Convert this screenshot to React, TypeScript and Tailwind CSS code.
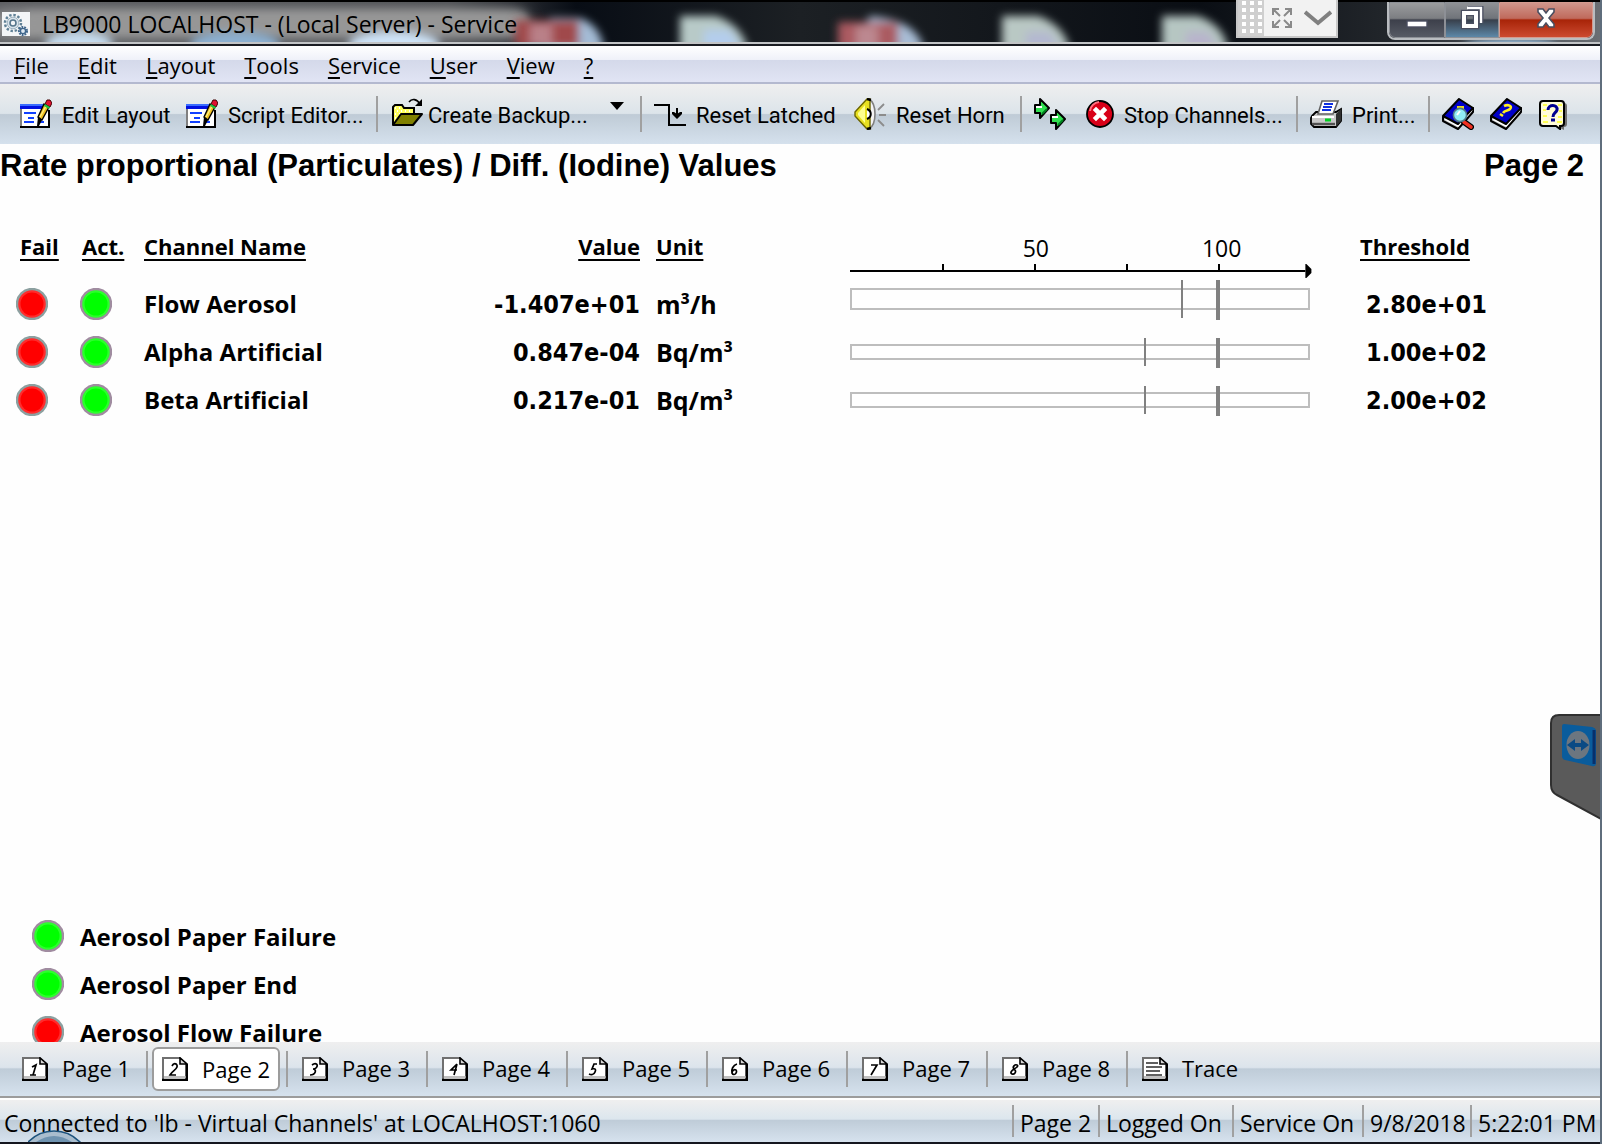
import type { ReactNode } from 'react';

/* ---------- icons ---------- */

function GearsIcon() {
  return (
    <svg viewBox="0 0 28 24" className="h-6 w-7 shrink-0">
      <rect width="28" height="24" fill="#f3f5f7" />
      <circle cx="11" cy="11" r="8" fill="none" stroke="#5f8096" strokeWidth="2.5" strokeDasharray="2.4 1.8" />
      <circle cx="11" cy="11" r="5.8" fill="#d7e2ea" stroke="#9fb4c2" />
      <circle cx="11" cy="11" r="3" fill="#f3f5f7" stroke="#56768c" strokeWidth="1.6" />
      <circle cx="21" cy="19" r="4" fill="none" stroke="#3f668c" strokeWidth="2" strokeDasharray="1.8 1" />
      <circle cx="21" cy="19" r="2.6" fill="#dfe9f2" stroke="#3f668c" strokeWidth="1.4" />
    </svg>
  );
}

function EditLayoutIcon() {
  return (
    <svg viewBox="0 0 32 32" className="size-8 shrink-0">
      <path d="M0 6h28v24H0z" fill="#808080" />
      <path d="M2 8h26v20H2z" fill="#fff" />
      <path d="M0 6h26v2H0z" fill="#3a6cff" />
      <path d="M0 8h26v3H0z" fill="#0010e0" />
      <path d="M0 28h30v2H0zM28 12h2v18h-2z" fill="#000" />
      <path d="M4 15h12M8 20h6M4 24h10M18 24h6" stroke="#1040ff" strokeWidth="2" />
      <path d="M24 6l5 3-7 13-4-3z" fill="#f0c020" stroke="#000" strokeWidth="1.4" />
      <path d="M26 8l-6 11" stroke="#fff080" strokeWidth="1.4" />
      <path d="M27 2h3l2 3-2 4-5-3z" fill="#e01030" stroke="#400000" strokeWidth="1" />
      <path d="M25 6l5 3-1 2-5-3z" fill="#20c040" />
      <path d="M18 19l4 3-3 6h-2z" fill="#000" />
    </svg>
  );
}

function FolderIcon() {
  return (
    <svg viewBox="0 0 32 32" className="size-8 shrink-0">
      <path d="M1 27V9l2-2h7l2 3h10v6" fill="#ffff60" stroke="#000" strokeWidth="2" />
      <path d="M3 10h1M7 10h1M5 13h1M9 13h1M13 13h1M17 13h1M3 16h1M7 16h1M3 20h1" stroke="#fff" strokeWidth="2" />
      <path d="M1 27l8-11h21l-9 11z" fill="#808000" stroke="#000" strokeWidth="2" strokeLinejoin="round" />
      <path d="M17 4c3-4 8-3 11 2" fill="none" stroke="#000" strokeWidth="1.6" />
      <path d="M30 1v7h-7z" fill="#000" />
    </svg>
  );
}

function LatchIcon() {
  return (
    <svg viewBox="0 0 32 32" className="size-8 shrink-0">
      <path d="M0 7h15v20h17" fill="none" stroke="#000" strokeWidth="2" />
      <path d="M23 10v6" stroke="#000" strokeWidth="2" />
      <path d="M18 14h2l3 2 3-2h2v2l-5 5-5-5z" fill="#000" />
    </svg>
  );
}

function HornIcon() {
  return (
    <svg viewBox="0 0 32 32" className="size-8 shrink-0">
      <path d="M15 1c8 5 8 25 0 30z" fill="#f4f4f4" stroke="#808080" strokeWidth="1.6" />
      <path d="M1 14L13 1h3v30h-3L1 18z" fill="#e8e020" stroke="#6c6600" strokeWidth="1.4" />
      <path d="M4 15L11 7v18l-7-8z" fill="#ffff90" />
      <path d="M13 1l4 1M13 31l4-1" stroke="#000" strokeWidth="2.4" />
      <path d="M13 11c5 2 5 8 0 10" fill="#fff" stroke="#000" strokeWidth="2" />
      <path d="M24 12l6-6M25 17h7M24 22l6 6" stroke="#8c8c8c" strokeWidth="1.8" />
    </svg>
  );
}

function ArrowsIcon() {
  return (
    <svg viewBox="0 0 32 32" className="size-8 shrink-0">
      <g stroke="#000" strokeWidth="2" strokeLinejoin="round">
        <path d="M1 7h5V1l9 9-9 10v-5H1z" fill="#30e050" />
        <path d="M17 17h5v-5l9 9-9 10v-6h-5z" fill="#30e050" />
      </g>
      <path d="M2 9h6M18 19h6" stroke="#fff" strokeWidth="2" />
      <path d="M8 16l5-5M24 27l5-5" stroke="#008020" strokeWidth="2" />
    </svg>
  );
}

function StopIcon() {
  return (
    <svg viewBox="0 0 32 32" className="size-8 shrink-0">
      <circle cx="14" cy="16" r="13" fill="#d80018" stroke="#000" strokeWidth="1.8" />
      <path d="M4 13a10 10 0 0 1 9-9" fill="none" stroke="#ff7080" strokeWidth="2" />
      <path d="M10 12l8 8M18 12l-8 8" stroke="#fff" strokeWidth="4.6" strokeLinecap="square" />
    </svg>
  );
}

function PrinterIcon() {
  return (
    <svg viewBox="0 0 32 32" className="size-8 shrink-0">
      <path d="M2 18l4-4h20l5-3v12l-5 6H4l-3-3v-6z" fill="#c8c8c8" stroke="#000" strokeWidth="1.8" />
      <path d="M26 16l5-5v12l-5 6z" fill="#303030" />
      <path d="M8 16l4-13h16l-5 13z" fill="#fff" stroke="#606060" strokeWidth="1.6" />
      <path d="M14 6h9M13 9h9M12 12h9" stroke="#1030e0" strokeWidth="1.8" />
      <path d="M2 19h22" stroke="#fff" strokeWidth="2" />
      <path d="M15 22h6" stroke="#00d020" strokeWidth="3" />
      <path d="M2 26h23" stroke="#505050" strokeWidth="2.4" />
    </svg>
  );
}

function BookShape() {
  return (
    <>
      <path d="M1 19v4l15 8 15-17v-4z" fill="#c0c4c4" stroke="#000" strokeWidth="2" strokeLinejoin="round" />
      <path d="M3 21l13 7 14-16" fill="none" stroke="#fff" strokeWidth="1.6" />
      <path d="M1 18L17 1l14 9-15 16z" fill="#0000c8" stroke="#000" strokeWidth="2" strokeLinejoin="round" />
    </>
  );
}

function BookSearchIcon() {
  return (
    <svg viewBox="0 0 32 32" className="size-8 shrink-0">
      <BookShape />
      <path d="M15 8h7v4h-7z" fill="#e8d820" />
      <path d="M22 24l7 5" stroke="#000" strokeWidth="6" strokeLinecap="round" />
      <path d="M22 24l7 5" stroke="#f03020" strokeWidth="3.6" strokeLinecap="round" />
      <circle cx="18" cy="17" r="6.6" fill="#90ecf4" stroke="#507888" strokeWidth="1.6" />
      <path d="M15 17l3-4" stroke="#fff" strokeWidth="2" />
    </svg>
  );
}

function BookHelpIcon() {
  return (
    <svg viewBox="0 0 32 32" className="size-8 shrink-0">
      <BookShape />
      <path d="M14 8c4-2 9 0 6 3-2 2-5 1-7 4" fill="none" stroke="#ffee20" strokeWidth="2.6" />
      <path d="M10 16l3 2" stroke="#ffee20" strokeWidth="2.4" />
    </svg>
  );
}

function HelpIcon() {
  return (
    <svg viewBox="0 0 32 32" className="size-8 shrink-0">
      <path d="M6 5h20q3 0 3 3v18q0 3-3 3v3l-6-3H6z" fill="#707070" />
      <path d="M5 3h18q3 0 3 3v19q0 3-3 3h-1v3l-4-3H5q-3 0-3-3V6q0-3 3-3z" fill="#fffcd8" stroke="#000" strokeWidth="2" />
      <path d="M5 7h4M5 12h3M5 18h4M5 24h5M20 7h4M21 13h3M20 19h4M19 24h5" stroke="#ffff50" strokeWidth="2" />
      <path d="M10 12c0-6 10-6 9 0-1 3-4 3-4 7" fill="none" stroke="#000090" strokeWidth="3" />
      <path d="M13 22h4" stroke="#000090" strokeWidth="3" />
    </svg>
  );
}

const digitPaths: Record<string, string> = {
  '1': 'M10 10l4-2-3 10M8 18h6',
  '2': 'M10 9c2-4 6-2 5 1-1 3-5 4-7 8h6',
  '3': 'M10 8c4-3 7 0 4 3-1 1-3 1-3 1 4 0 3 6-3 6',
  '4': 'M15 7l-6 6h6M15 7l-3 11',
  '5': 'M15 7h-3l-2 5c4-1 4 1 3 3-1 3-4 3-6 2',
  '6': 'M15 7c-4 1-6 6-5 9 2 4 6-1 4-3-2-1-3 0-4 2',
  '7': 'M9 8h6L9 18',
  '8': 'M12 12c-2-2 1-5 3-4 2 1-1 3-3 4-3 2-4 4-2 5 3 1 5-3 2-5z',
};

function PageIcon({ mark }: { mark: string }) {
  return (
    <svg viewBox="0 0 26 24" className="h-6 w-[26px] shrink-0">
      <path d="M1 1h17l6 6v16H1z" fill="#fff" stroke="#707070" strokeWidth="2" />
      <path d="M2 20h22" stroke="#c0c0c0" strokeWidth="2" />
      <path d="M0 23h25V7" fill="none" stroke="#000" strokeWidth="2.4" />
      <path d="M18 1v6h7z" fill="#d8d8d8" stroke="#000" strokeWidth="1.6" />
      {mark === 'lines' ? (
        <path d="M4 6h12M4 10h16M4 14h14M4 18h16" stroke="#606060" strokeWidth="1.8" />
      ) : (
        <path d={digitPaths[mark]} fill="none" stroke="#000" strokeWidth="1.7" />
      )}
    </svg>
  );
}

/* ---------- window frame ---------- */

function GlassBackdrop() {
  const lights = [
    { x: 45, w: 68, c: '#c6dcee' },
    { x: 190, w: 90, c: '#8db0d0' },
    { x: 348, w: 92, c: '#cfe4f8' },
  ];
  return (
    <svg aria-hidden="true" className="absolute inset-0 h-full w-full">
      <defs>
        <filter id="soft" x="-20%" y="-60%" width="140%" height="220%">
          <feGaussianBlur stdDeviation="4" />
        </filter>
        <filter id="wide" x="-20%" y="-100%" width="140%" height="300%">
          <feGaussianBlur stdDeviation="9" />
        </filter>
        <linearGradient id="night" x1="0" x2="1" y1="0" y2="0">
          <stop offset="0" stopColor="#54565a" />
          <stop offset="0.28" stopColor="#484a4e" />
          <stop offset="0.36" stopColor="#080d15" />
          <stop offset="0.5" stopColor="#1c2024" />
          <stop offset="0.75" stopColor="#0a0e14" />
          <stop offset="0.87" stopColor="#22262b" />
          <stop offset="1" stopColor="#6a6e73" />
        </linearGradient>
      </defs>
      <rect width="100%" height="100%" fill="url(#night)" />
      <rect x="-10" y="10" width="536" height="24" rx="10" fill="#a8a8a8" filter="url(#wide)" />
      <rect x="20" y="10" width="508" height="22" rx="9" fill="#969696" filter="url(#soft)" />
      <g filter="url(#soft)">
        {lights.map((l) => (
          <ellipse key={l.x} cx={l.x + l.w / 2} cy="42" rx={l.w / 2} ry="13" fill={l.c} />
        ))}
        <path d="M550 16h30q22 8 24 34h-60z" fill="#a4bcd6" />
        <rect x="515" y="18" width="64" height="28" fill="#a0484c" />
        <rect x="530" y="22" width="22" height="24" fill="#b98088" />
        <path d="M680 14h36q28 10 32 36h-68z" fill="#b8cac8" />
        <path d="M704 28h26l12 20h-38z" fill="#b4cdec" />
        <path d="M870 14q50 4 54 36h-74z" fill="#a9bdd6" />
        <rect x="838" y="20" width="60" height="28" fill="#aa5a60" />
        <rect x="856" y="24" width="22" height="24" fill="#bc8890" />
        <path d="M1002 14h36q28 10 32 36h-68z" fill="#b9c8c4" />
        <path d="M1026 30h24l12 20h-36z" fill="#b4b8d0" />
        <path d="M1162 14h36q28 10 30 36h-66z" fill="#b6c6c2" />
        <path d="M1186 30h22l12 20h-34z" fill="#b8b4cc" />
        <ellipse cx="1510" cy="44" rx="46" ry="6" fill="#a8d4f8" />
      </g>
    </svg>
  );
}

function RemoteWidget() {
  return (
    <div className="absolute top-0 right-[262px] flex h-[38px] border-2 border-t-0 border-[#c8c8c8] bg-[#f2f2f2]">
      <svg viewBox="0 0 26 36" className="h-9 w-[26px] bg-[#cfcfcf]">
        {[2, 9, 16, 23, 30].map((y) =>
          [4, 12, 20].map((x) => <rect key={`${x}-${y}`} x={x} y={y - 1} width="4" height="4" fill="#fff" />),
        )}
      </svg>
      <button aria-label="Full screen" className="flex w-9 items-center justify-center">
        <svg viewBox="0 0 20 20" className="size-5" fill="none" stroke="#8a8a8a" strokeWidth="2">
          <path d="M1 7V1h6M13 1h6v6M19 13v6h-6M7 19H1v-6M1 1l7 7M19 1l-7 7M19 19l-7-7M1 19l7-7" />
        </svg>
      </button>
      <button aria-label="Expand" className="flex w-9 items-center justify-center">
        <svg viewBox="0 0 28 16" className="h-4 w-7" fill="none" stroke="#808080" strokeWidth="4">
          <path d="M1 2l13 11L27 2" />
        </svg>
      </button>
    </div>
  );
}

function CaptionButtons() {
  return (
    <div className="absolute top-0.5 right-[5px] flex h-[38px] overflow-hidden rounded-b-lg border-2 border-t-0 border-[#b9bcc0] bg-[#30343c]">
      <button
        aria-label="Minimize"
        className="flex w-[56px] items-center justify-center rounded-bl-md border border-[#8d9096] bg-linear-[180deg,#9b9c9e_0%,#7c7e82_45%,#3d404b_50%,#565a64_100%]"
      >
        <svg viewBox="0 0 24 20" className="h-5 w-6">
          <rect x="2" y="11" width="20" height="6" fill="#fff" stroke="#4a4e60" strokeWidth="1.4" />
        </svg>
      </button>
      <button
        aria-label="Restore"
        className="flex w-[54px] items-center justify-center border border-[#8d9096] bg-linear-[180deg,#8f9195_0%,#70747a_45%,#38404c_50%,#5d88a8_100%]"
      >
        <svg viewBox="0 0 24 24" className="-mt-1 size-6" fill="none">
          <path d="M8 2h13v15" stroke="#4a4e60" strokeWidth="5" />
          <path d="M7 2h14v15" stroke="#fff" strokeWidth="2.4" />
          <rect x="4" y="7" width="12" height="13" stroke="#4a4e60" strokeWidth="6.4" />
          <rect x="4" y="7" width="12" height="13" stroke="#fff" strokeWidth="4" />
        </svg>
      </button>
      <button
        aria-label="Close"
        className="flex w-[94px] items-center justify-center rounded-br-md border border-[#d49b90] bg-linear-[180deg,#d0968c_0%,#c06a5c_45%,#a82408_50%,#cc4a30_100%]"
      >
        <svg viewBox="0 0 24 20" className="-mt-1 h-5 w-6" fill="none">
          <path d="M4 1h5l3 4 3-4h5v3l-5 6 5 6v3h-5l-3-4-3 4H4v-3l5-6-5-6z" fill="#fff" stroke="#4a4e60" strokeWidth="1.6" />
        </svg>
      </button>
    </div>
  );
}

function TitleBar() {
  return (
    <header className="relative h-[46px] shrink-0 border-b-2 border-[#1a1c22] bg-black">
      <div className="relative flex h-11 items-center overflow-hidden border-t-2 border-b-2 border-t-black border-b-[#c2c4c6] pt-1 pl-0.5">
        <GlassBackdrop />
        <div className="relative flex items-center gap-3">
          <GearsIcon />
          <h1 className="text-[23px] leading-8 whitespace-nowrap">LB9000 LOCALHOST - (Local Server) - Service</h1>
        </div>
      </div>
      <RemoteWidget />
      <CaptionButtons />
    </header>
  );
}

const menus = ['File', 'Edit', 'Layout', 'Tools', 'Service', 'User', 'View', '?'];

function MenuBar() {
  return (
    <nav className="flex h-[38px] shrink-0 items-center gap-[29px] border-b-2 border-[#b4b9cf] bg-linear-[180deg,#ffffff_0%,#eff1f9_38%,#d4d9ea_40%,#e1e4f4_100%] pt-0.5 pl-3.5">
      {menus.map((m) => (
        <button key={m} className="text-[22px] leading-8">
          <span className="underline decoration-2 underline-offset-3">{m[0]}</span>
          {m.slice(1)}
        </button>
      ))}
    </nav>
  );
}

function Separator() {
  return <div className="h-9 w-0.5 shrink-0 bg-[#a0a0a0]" />;
}

function ToolButton({ icon, label, className }: { icon: ReactNode; label: string; className: string }) {
  return (
    <button className={`flex shrink-0 items-center text-[22px] whitespace-nowrap ${className}`}>
      {icon}
      <span className="pt-0.5">{label}</span>
    </button>
  );
}

function ToolBar() {
  return (
    <div
      role="toolbar"
      className="flex h-[60px] shrink-0 items-center bg-linear-[180deg,#efefef_0%,#dce4ea_49%,#bfcbd6_51%,#d5e1ed_100%] pl-5 font-['Roboto',sans-serif]"
    >
      <ToolButton icon={<EditLayoutIcon />} label="Edit Layout" className="w-[166px] gap-2.5" />
      <ToolButton icon={<EditLayoutIcon />} label="Script Editor..." className="w-[190px] gap-2.5" />
      <Separator />
      <ToolButton icon={<FolderIcon />} label="Create Backup..." className="w-[232px] gap-1 pl-3.5" />
      <button aria-label="Backup options" className="h-9 w-[30px] shrink-0">
        <svg viewBox="0 0 14 8" className="-mt-3 h-2 w-3.5">
          <path d="M0 0h14L7 8z" fill="#000" />
        </svg>
      </button>
      <Separator />
      <ToolButton icon={<LatchIcon />} label="Reset Latched" className="w-[212px] gap-2.5 pl-3" />
      <ToolButton icon={<HornIcon />} label="Reset Horn" className="w-[166px] gap-2.5" />
      <Separator />
      <button aria-label="Start channels" className="w-[64px] shrink-0 pl-3">
        <ArrowsIcon />
      </button>
      <ToolButton icon={<StopIcon />} label="Stop Channels..." className="w-[210px] gap-1.5" />
      <Separator />
      <ToolButton icon={<PrinterIcon />} label="Print..." className="w-[130px] gap-2.5 pl-3" />
      <Separator />
      <div className="flex gap-4 pl-3">
        <button aria-label="Search help">
          <BookSearchIcon />
        </button>
        <button aria-label="Help topics">
          <BookHelpIcon />
        </button>
        <button aria-label="About">
          <HelpIcon />
        </button>
      </div>
    </div>
  );
}

/* ---------- content ---------- */

function Lamp({ on, label }: { on: boolean; label: string }) {
  return (
    <svg viewBox="0 0 32 32" className="size-8 shrink-0" role="img" aria-label={label}>
      <circle cx="16" cy="16" r="15" fill={on ? '#2cff2c' : '#ff2c2c'} stroke={on ? '#a08ca0' : '#8ca0a0'} strokeWidth="2.4" />
      <circle cx="16" cy="16" r="11.5" fill={on ? '#00ff00' : '#ff0000'} />
    </svg>
  );
}

function Axis() {
  return (
    <svg className="block h-[58px] w-full overflow-visible" role="img" aria-label="Percent of threshold">
      <rect x="0" y="48" width="99%" height="2" />
      {['20%', '40%', '60%', '80%'].map((x) => (
        <rect key={x} x={x} y="42" width="2" height="6" />
      ))}
      <g className="text-[23px] font-normal" textAnchor="middle">
        <text x="40.4%" y="35">50</text>
        <text x="80.8%" y="35">100</text>
      </g>
      <svg x="99%" y="42" width="8" height="14" overflow="visible">
        <path d="M0 0h1l5 5v4l-5 5H0z" />
      </svg>
    </svg>
  );
}

function Gauge({ warn, tall }: { warn: string; tall: boolean }) {
  return (
    <div className="relative h-12">
      <div className={`absolute inset-x-0 border-2 border-[#bdbdbd] ${tall ? 'top-2 h-[22px]' : 'top-4 h-4'}`} />
      <div
        className={`absolute w-0.5 bg-[#808080] ${tall ? 'top-0 h-[38px]' : 'top-2.5 h-7'}`}
        style={{ left: warn }}
      />
      <div className={`absolute left-[80%] -ml-0.5 w-1 bg-[#808080] ${tall ? 'top-0 h-10' : 'top-2.5 h-[30px]'}`} />
    </div>
  );
}

const channels = [
  { name: 'Flow Aerosol', value: '-1.407e+01', unit: 'm³/h', threshold: '2.80e+01', warn: '72%', tall: true },
  { name: 'Alpha Artificial', value: '0.847e-04', unit: 'Bq/m³', threshold: '1.00e+02', warn: '64%', tall: false },
  { name: 'Beta Artificial', value: '0.217e-01', unit: 'Bq/m³', threshold: '2.00e+02', warn: '64%', tall: false },
];

const heading = 'pt-2 align-top text-[22px] leading-8 font-bold underline decoration-2 underline-offset-4';
const figure = "pt-0.5 text-[25px] font-['DejaVu_Sans_Condensed','DejaVu_Sans',sans-serif]";

function ChannelTable() {
  return (
    <table className="w-full table-fixed text-left">
      <colgroup>
        <col className="w-20" />
        <col className="w-16" />
        <col className="w-64" />
        <col className="w-[240px]" />
        <col className="w-[210px]" />
        <col />
        <col className="w-[290px]" />
      </colgroup>
      <thead>
        <tr>
          <th className={`pl-5 ${heading}`}>Fail</th>
          <th className={`pl-0.5 ${heading}`}>Act.</th>
          <th className={`whitespace-nowrap ${heading}`}>Channel Name</th>
          <th className={`text-right ${heading}`}>Value</th>
          <th className={`pl-4 ${heading}`}>Unit</th>
          <th className="p-0">
            <Axis />
          </th>
          <th className={`pl-[50px] ${heading}`}>Threshold</th>
        </tr>
      </thead>
      <tbody className="text-2xl leading-8 font-bold whitespace-nowrap">
        {channels.map((c) => (
          <tr key={c.name} className="h-12">
            <td className="pl-4">
              <Lamp on={false} label="Failure" />
            </td>
            <td>
              <Lamp on label="Active" />
            </td>
            <td>{c.name}</td>
            <td className={`text-right ${figure}`}>{c.value}</td>
            <td className="pl-4 text-[25px]">{c.unit}</td>
            <td>
              <Gauge warn={c.warn} tall={c.tall} />
            </td>
            <td className={`pl-14 ${figure}`}>{c.threshold}</td>
          </tr>
        ))}
      </tbody>
    </table>
  );
}

const states = [
  { label: 'Aerosol Paper Failure', on: true },
  { label: 'Aerosol Paper End', on: true },
  { label: 'Aerosol Flow Failure', on: false },
];

function SideTab() {
  return (
    <button aria-label="Remote session panel" className="absolute right-0 bottom-[222px]">
      <svg viewBox="0 0 50 106" className="h-[106px] w-[50px]">
        <path d="M51 1H9Q1 1 1 9v62q0 7 6 10l44 24z" fill="#5a5a5a" stroke="#303030" strokeWidth="2" />
        <path d="M14 10l28 3q4 1 4 4v32q0 4-4 3L15 46q-3-1-3-4V13q0-3 2-3z" fill="#0a5c9c" />
        <path d="M44 16v34" stroke="#08306c" strokeWidth="3" />
        <ellipse cx="28" cy="31" rx="11.5" ry="14" fill="#6c7680" />
        <path d="M17 31l8-6v4h6v-4l8 6-8 6v-4h-6v4z" fill="#0a4a84" />
      </svg>
    </button>
  );
}

function Content() {
  return (
    <main className="relative flex min-h-0 flex-1 flex-col overflow-hidden bg-[#fefefe]">
      <div className="flex h-[78px] shrink-0 justify-between pt-1 pr-4 font-['Liberation_Sans',sans-serif] text-[31px] leading-9 font-bold">
        <h2>Rate proportional (Particulates) / Diff. (Iodine) Values</h2>
        <p>Page 2</p>
      </div>
      <ChannelTable />
      <ul className="mt-auto -mb-3.5 pl-8 text-2xl font-bold">
        {states.map((s) => (
          <li key={s.label} className="flex h-12 items-center gap-4">
            <Lamp on={s.on} label={s.on ? 'OK' : 'Failure'} />
            <span className="pt-0.5">{s.label}</span>
          </li>
        ))}
      </ul>
      <SideTab />
    </main>
  );
}

/* ---------- bottom bars ---------- */

const tabs = ['1', '2', '3', '4', '5', '6', '7', '8'];

function PageTabs() {
  return (
    <nav className="flex h-[54px] shrink-0 items-center bg-linear-[180deg,#efefef_0%,#dce4ec_47%,#bfccd8_50%,#d6e2ee_100%] pl-2 text-[22px] leading-8">
      {tabs.map((t) => (
        <div key={t} className="flex w-[140px] shrink-0 items-center justify-between">
          <button
            aria-current={t === '2' ? 'page' : undefined}
            className={
              t === '2'
                ? 'ml-1 flex h-11 w-32 items-center gap-3.5 rounded-md border-2 border-[#9c9c9c] bg-white pl-2'
                : 'flex h-11 w-32 items-center gap-3.5 pl-3.5'
            }
          >
            <PageIcon mark={t} />
            <span className={t === '2' ? '' : 'pb-0.5'}>Page {t}</span>
          </button>
          <Separator />
        </div>
      ))}
      <button className="flex h-11 items-center gap-3.5 pl-3.5">
        <PageIcon mark="lines" />
        <span className="pb-0.5">Trace</span>
      </button>
    </nav>
  );
}

function StatusBar() {
  const field = 'flex h-8 shrink-0 items-center border-l-2 border-[#a0a0a0] pt-1 pl-1.5';
  return (
    <footer className="relative flex h-[48px] shrink-0 items-center overflow-hidden border-t-2 border-b-2 border-t-[#9c9c9c] border-b-[#14161e] bg-linear-[180deg,#ffffff_0%,#ffffff_4%,#efefef_5%,#dce6ee_48%,#bfccd8_51%,#d6e2ee_100%] pt-0.5 text-[23px] whitespace-nowrap">
      <p className="flex-1 pt-1 pl-1">Connected to 'lb - Virtual Channels' at LOCALHOST:1060</p>
      <p className={`w-[86px] ${field}`}>Page 2</p>
      <p className={`w-[134px] ${field}`}>Logged On</p>
      <p className={`w-[130px] ${field}`}>Service On</p>
      <p className={`w-[108px] ${field}`}>9/8/2018</p>
      <p className={`w-[130px] ${field}`}>5:22:01 PM</p>
      <svg aria-hidden="true" viewBox="0 0 54 12" className="absolute bottom-0 left-7 h-3 w-[54px]">
        <circle cx="26" cy="37" r="36" fill="#a9bdce" stroke="#1c527c" strokeWidth="1.6" />
        <path d="M8 12q18-12 36 0z" fill="#6f93b0" />
      </svg>
    </footer>
  );
}

export default function App() {
  return (
    <div className="flex h-screen flex-col overflow-hidden border-r-2 border-[#5f6d7c] bg-white font-['Open_Sans',sans-serif] text-black">
      <TitleBar />
      <MenuBar />
      <ToolBar />
      <Content />
      <PageTabs />
      <StatusBar />
    </div>
  );
}
